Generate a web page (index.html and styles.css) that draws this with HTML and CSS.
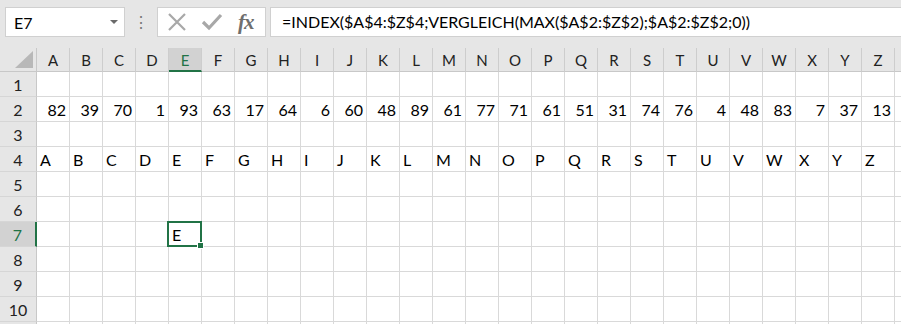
FILE: index.html
```html
<!DOCTYPE html>
<html lang="de">
<head>
    <meta charset="UTF-8">
    <title>Tabelle</title>
    <link rel="stylesheet" href="styles.css">
</head>
<body>
    <div class="toolbar">
        <div class="namebox">
            <span>E7</span>
            <span class="drop"></span>
        </div>
        <div class="grip">⋮</div>
        <div class="fx-buttons">
            <svg class="ico" width="22" height="22" viewBox="0 0 22 22"><path d="M3 3 L19 19 M19 3 L3 19" stroke="#a8a8a8" stroke-width="2.2" fill="none"/></svg>
            <svg class="ico" width="24" height="22" viewBox="0 0 24 22"><path d="M3 11 L9 17 L21 4" stroke="#a8a8a8" stroke-width="3.2" fill="none"/></svg>
            <span class="fx">fx</span>
        </div>
        <div class="formula">=INDEX($A$4:$Z$4;VERGLEICH(MAX($A$2:$Z$2);$A$2:$Z$2;0))</div>
    </div>

    <div class="sheet" id="sheet"></div>

    <script>
        const letters = 'ABCDEFGHIJKLMNOPQRSTUVWXYZ'.split('');
        const values = [82, 39, 70, 1, 93, 63, 17, 64, 6, 60, 48, 89, 61, 77, 71, 61, 51, 31, 74, 76, 4, 48, 83, 7, 37, 13];
        const sheet = document.getElementById('sheet');

        function cell(cls, text) {
            const div = document.createElement('div');
            div.className = cls;
            if (text !== undefined) div.textContent = text;
            sheet.appendChild(div);
            return div;
        }

        // header row
        const corner = cell('corner');
        corner.innerHTML = '<span class="tri"></span>';
        letters.forEach(l => cell(l === 'E' ? 'colhead active' : 'colhead', l));
        cell('colhead');

        // rows 1-10, plus the sliver of row 11 at the bottom edge
        for (let r = 1; r <= 11; r++) {
            cell(r === 7 ? 'rowhead active' : 'rowhead', r <= 10 ? r : '');
            letters.forEach((l, i) => {
                if (r === 2) cell('c num', values[i]);
                else if (r === 4) cell('c', l);
                else if (r === 7 && l === 'E') cell('c sel', 'E');
                else cell('c');
            });
            cell('c');
        }
    </script>
</body>
</html>
```

FILE: styles.css
```css
body {
    margin: 0;
    font-family: Lato, "Open Sans", sans-serif;
    background: #fff;
    overflow: hidden;
    color: #000;
}

.toolbar {
    height: 48px;
    background: #e6e6e6;
    display: flex;
    align-items: flex-start;
    padding-top: 7px;
    box-sizing: border-box;
}
.namebox {
    margin-left: 5px;
    width: 120px;
    height: 30px;
    background: #fff;
    border: 1px solid #d0d0d0;
    box-sizing: border-box;
    display: flex;
    align-items: center;
    justify-content: space-between;
    padding: 0 6px 0 8px;
    font-size: 16px;
}
.drop {
    width: 0;
    height: 0;
    border-left: 4px solid transparent;
    border-right: 4px solid transparent;
    border-top: 4px solid #6a6a6a;
}
.grip {
    width: 32px;
    text-align: center;
    line-height: 30px;
    color: #777;
    font-size: 16px;
}
.fx-buttons {
    width: 109px;
    height: 30px;
    background: #fff;
    border: 1px solid #d0d0d0;
    box-sizing: border-box;
    display: flex;
    align-items: center;
    padding-left: 8px;
    gap: 12px;
}
.fx {
    font-family: "Liberation Serif", serif;
    font-style: italic;
    font-weight: bold;
    font-size: 21px;
    color: #6e6e6e;
    margin-left: 2px;
    letter-spacing: -1px;
}
.formula {
    flex: 1;
    margin-left: 4px;
    height: 30px;
    background: #fff;
    border: 1px solid #d0d0d0;
    border-right: none;
    box-sizing: border-box;
    padding-left: 11px;
    line-height: 28px;
    font-size: 16px;
    white-space: nowrap;
}

.sheet {
    display: grid;
    grid-template-columns: 37px repeat(26, 33px) 1fr;
    grid-template-rows: 24px;
    grid-auto-rows: 25px;
}
.sheet > div {
    box-sizing: border-box;
}
.corner {
    background: #e6e6e6;
    border-right: 1px solid #c8c8c8;
    border-bottom: 1px solid #c8c8c8;
    position: relative;
}
.tri {
    position: absolute;
    right: 3px;
    bottom: 3px;
    width: 18px;
    height: 17px;
    background: #b8b8b8;
    clip-path: polygon(100% 0, 100% 100%, 0 100%);
}
.colhead {
    background: #e6e6e6;
    border-right: 1px solid #cdcdcd;
    border-bottom: 1px solid #c8c8c8;
    text-align: center;
    font-size: 15px;
    line-height: 24px;
    color: #222;
}
.rowhead {
    background: #e6e6e6;
    border-right: 1px solid #c8c8c8;
    border-bottom: 1px solid #d6d6d6;
    text-align: center;
    font-size: 16px;
    line-height: 25px;
    color: #222;
}
.colhead.active {
    background: #d2d2d2;
    color: #217346;
    border-bottom: 2px solid #217346;
}
.rowhead.active {
    background: #d2d2d2;
    color: #217346;
    border-right: 2px solid #217346;
}
.c {
    border-right: 1px solid #d9d9d9;
    border-bottom: 1px solid #d9d9d9;
    font-size: 16px;
    line-height: 25px;
    padding: 0 3px;
    white-space: nowrap;
}
.num {
    text-align: right;
}
.sel {
    position: relative;
}
.sel::before {
    content: "";
    position: absolute;
    left: -2px;
    top: -1px;
    right: -1px;
    bottom: -1px;
    border: 2px solid #217346;
}
.sel::after {
    content: "";
    position: absolute;
    right: -3px;
    bottom: -3px;
    width: 5px;
    height: 5px;
    background: #217346;
    border: 1px solid #fff;
}
```
